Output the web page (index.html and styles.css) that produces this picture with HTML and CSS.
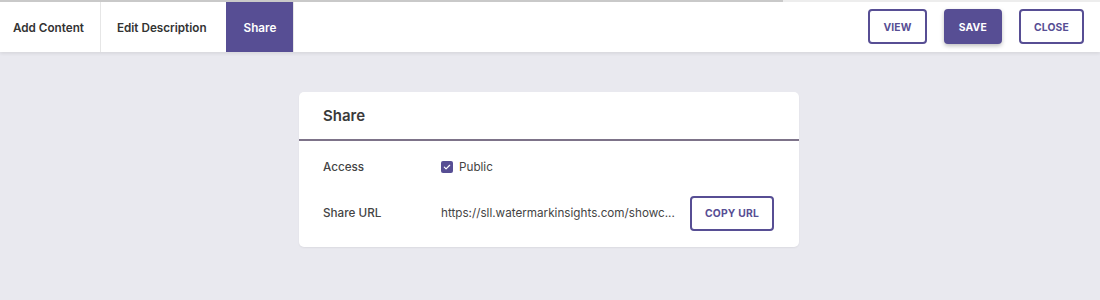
FILE: index.html
```html
<!DOCTYPE html>
<html lang="en">
<head>
<meta charset="utf-8">
<title>Share</title>
<link rel="stylesheet" href="styles.css">
</head>
<body>
<header class="top-bar">
  <nav class="tabs">
    <a href="#" class="tab">Add Content</a>
    <a href="#" class="tab">Edit Description</a>
    <a href="#" class="tab on">Share</a>
  </nav>
  <div class="actions">
    <button type="button" class="btn">View</button>
    <button type="button" class="btn btn-fill">Save</button>
    <button type="button" class="btn">Close</button>
  </div>
</header>

<main class="content">
  <section class="card">
    <h1 class="card-head">Share</h1>
    <div class="card-body">
      <div class="row">
        <span class="label">Access</span>
        <label class="chk">
          <span class="box"><svg viewBox="0 0 12 12" width="8" height="8"><path d="M2 6.3l2.6 2.6L10 3.4" fill="none" stroke="#fff" stroke-width="1.8" stroke-linecap="round" stroke-linejoin="round"/></svg></span>
          <span>Public</span>
        </label>
      </div>
      <div class="row">
        <span class="label">Share URL</span>
        <span class="url">https://sll.watermarkinsights.com/showc...</span>
        <button type="button" class="btn btn-copy">Copy URL</button>
      </div>
    </div>
  </section>
</main>
</body>
</html>
```

FILE: styles.css
```css
*{margin:0;padding:0;box-sizing:border-box}
html,body{height:100%}
body{background-color:#e9e9ef;font-family:Inter,"Noto Sans",sans-serif;font-size:11.7px;color:#333}
button{font-family:inherit;cursor:pointer}

.top-bar{display:flex;align-items:stretch;justify-content:space-between;height:52px;background:#fff;border-top:2px solid transparent;border-image:linear-gradient(to right,#c9c9c9 0,#c9c9c9 783px,#ededed 783px) 1;box-shadow:0 2px 3px rgba(0,0,0,.07)}
.tabs{display:flex}
.tab{display:flex;align-items:center;padding:1px 16px 0 13px;border-right:1px solid #e6e6e6;font-weight:600;font-size:11.7px;color:#333;text-decoration:none;white-space:nowrap}
.tab:nth-child(2){padding:1px 19px 0 16px;border-right:0}
.tab.on{padding:1px 17px 0 18px;background-color:#574e94;color:#fff}

.actions{display:flex;align-items:center;gap:17px;padding:0 16px 1px 0}
.btn{height:35px;padding:0 13px;border:2px solid #574e94;border-radius:4px;background:#fff;font-size:10.3px;font-weight:700;letter-spacing:.2px;text-transform:uppercase;white-space:nowrap;color:#574e94}
.btn-fill{background-color:#574e94;color:#fff;box-shadow:0 2px 4px rgba(0,0,0,.25)}

.content{display:flex;justify-content:center;padding:40px 0}
.card{width:500px;margin-left:-2px;background:#fff;border-radius:5px;box-shadow:0 1px 2px rgba(0,0,0,.06)}
.card-head{height:49px;padding:14px 24px 0;border-bottom:2px solid #7d7389;font-size:15px;font-weight:600;color:#3a3a3a}
.card-body{padding:3px 24px 11px}
.row{display:flex;align-items:center;height:46px}
.label{width:118px;flex:none;font-weight:500;color:#444}
.chk{display:flex;align-items:center;gap:6px;color:#444}
.box{display:flex;align-items:center;justify-content:center;width:12px;height:12px;border-radius:2px;background:#574e94}
.url{width:236px;overflow:hidden;white-space:nowrap;text-overflow:ellipsis;color:#444}
.btn-copy{height:35px;margin-left:13px;padding:0 13px}
```
